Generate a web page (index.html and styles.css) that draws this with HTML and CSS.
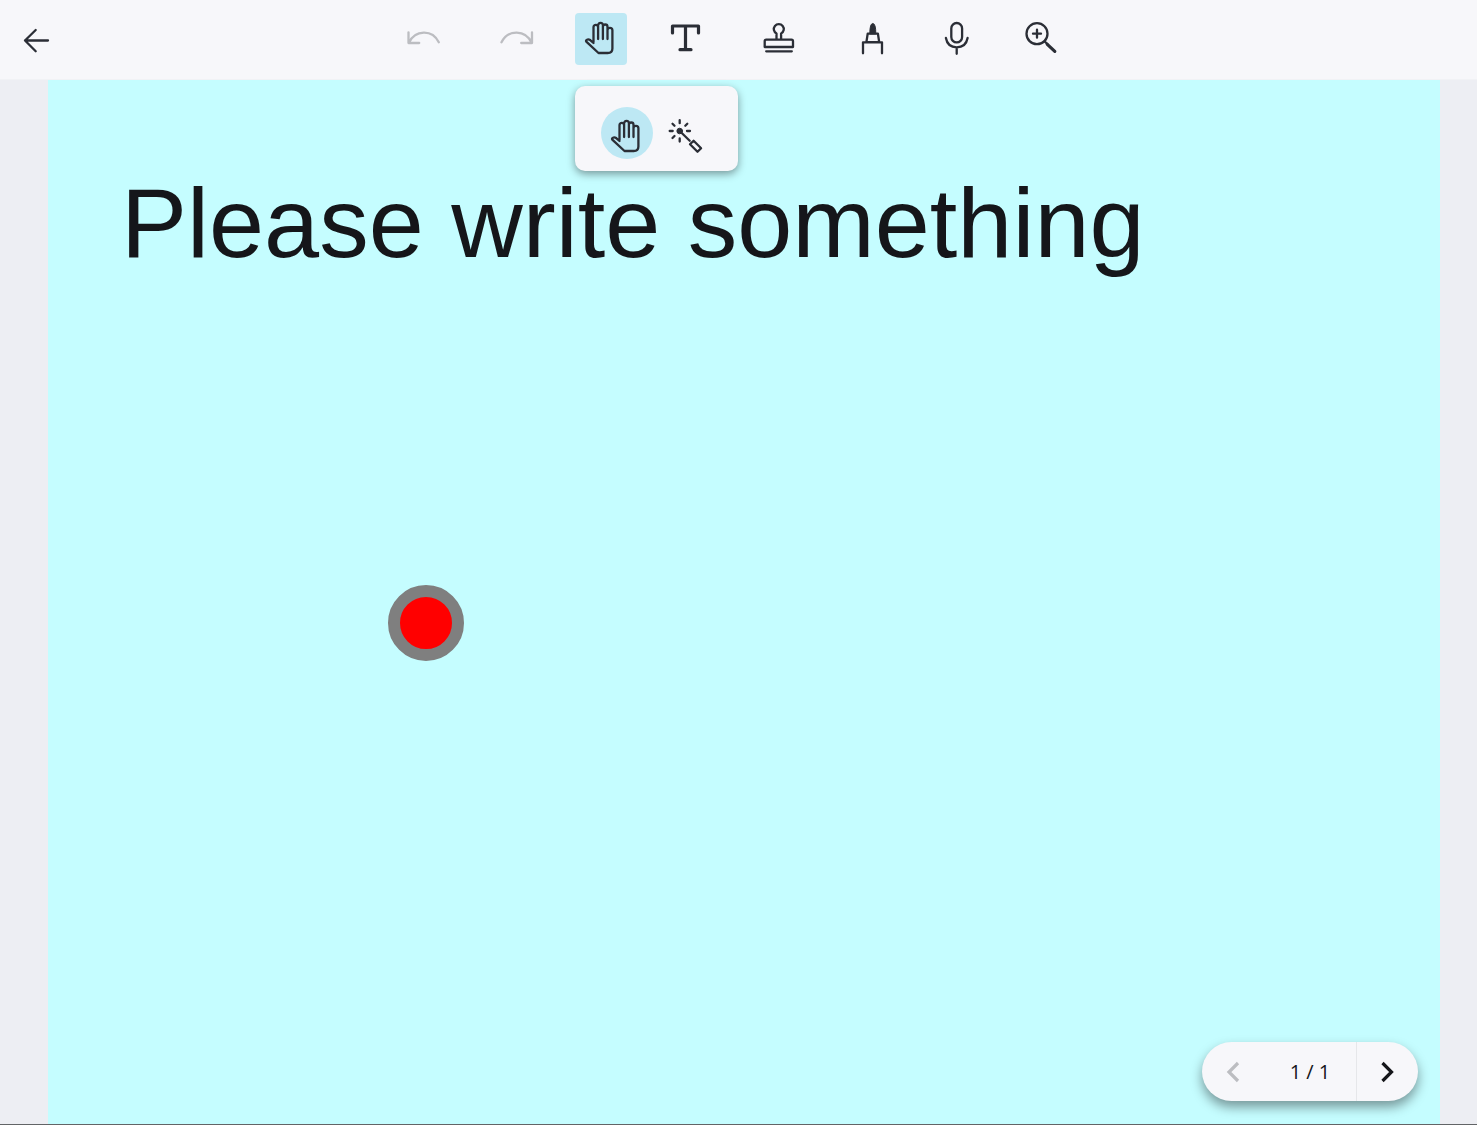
FILE: index.html
```
<!DOCTYPE html>
<html lang="en">
<head>
<meta charset="utf-8">
<meta name="viewport" content="width=device-width, initial-scale=1">
<title>Activity editor</title>
<link rel="stylesheet" href="styles.css">
</head>
<body>
<svg class="sprite" aria-hidden="true">
  <symbol id="hand" viewBox="0 0 52 52">
    <path d="M18.500 29V14.200a2.300 2.300 0 0 1 4.600 0V26M23.100 14.200v-1.900a2.400 2.400 0 0 1 4.800 0V26M27.900 13.800a2.300 2.300 0 0 1 4.600 0V26M32.500 17.300a2.400 2.400 0 0 1 4.900 0V35.500q0 4.500-4.700 4.500H23.500L11.300 28.700q-.8-1.200.6-1.900 1.500-.8 3.300.3l3.300 2.900"/>
  </symbol>
</svg>
<header class="topbar">
  <button class="tool" aria-label="Back"><svg viewBox="0 0 52 52"><path d="M38 27.500H15M25.700 17L15 27.500l10.700 10.700"/></svg></button>
  <nav class="toolbar" aria-label="Tools">
    <div class="group">
      <button class="tool" aria-label="Undo" disabled><svg viewBox="0 0 52 52"><path d="M10.500 19.300V30H21.200M11.100 29.500C17 16.500 34.500 16 40.800 29.300"/></svg></button>
    </div>
    <div class="group">
      <button class="tool" aria-label="Redo" disabled><svg viewBox="0 0 52 52"><path d="M41 19.300V30H30.200M40.500 29.500C34.500 16.500 17 16 10.500 29.300"/></svg></button>
      <div class="menu-anchor">
        <button class="tool active" aria-label="Hand" aria-expanded="true"><svg><use href="#hand"/></svg></button>
        <div class="popover">
          <button class="tool active round" aria-label="Move"><svg class="lowered"><use href="#hand"/></svg></button>
          <button class="tool" aria-label="Laser pointer"><svg viewBox="0 0 52 52"><circle class="solid" cx="20.700" cy="24" r="2.800"/><path d="M20.700 24l10 9.800M20.700 13.200v3M20.700 31.500v3M10.700 24h3M28 24h3M13.500 16.800l2 2M28.300 16.700l-2 2M13.500 31l2-2M31 37.300l3.600-3.600 7.500 7.500-3.600 3.600z"/></svg></button>
        </div>
      </div>
      <button class="tool" aria-label="Text"><svg viewBox="0 0 52 52"><path class="bold" d="M13.500 20V13H39.500v7M26.500 13V36.500M21 36.700H32"/></svg></button>
    </div>
    <div class="group">
      <button class="tool" aria-label="Stamp"><svg viewBox="0 0 52 52"><path d="M24.500 26.500V20.500a5 5 0 1 1 4.600 0V26.500M14.200 26.700H39.500q1.500 0 1.500 1.500V34H12.700V28.200q0-1.500 1.500-1.500z"/><path d="M14.200 38.300H39.800"/></svg></button>
    </div>
    <div class="group">
      <button class="tool" aria-label="Marker"><svg viewBox="0 0 52 52"><path class="solid" d="M24.800 20.500Q24.800 10.500 27.800 10.500T30.800 20.500z"/><path d="M22.700 20.700h10.200l1.300 8.500H21.400zM18 40.300V29.300H37v11"/></svg></button>
      <button class="tool" aria-label="Record audio"><svg viewBox="0 0 52 52"><rect x="22.300" y="10" width="10.800" height="19.400" rx="5.400"/><path d="M16.900 25C18 31 22 34.300 27.700 34.300S37.500 31 38.600 25M27.700 34.300v6.500"/></svg></button>
      <button class="tool" aria-label="Zoom in"><svg viewBox="0 0 52 52"><circle cx="24" cy="20.700" r="10.500"/><path d="M31.500 28.300l3 3M20 20.700h8M24 16.700v8"/><path class="bold" d="M34.300 31.300l7.500 7"/></svg></button>
    </div>
  </nav>
</header>
<main class="workspace">
  <section class="canvas">
    <h1 class="prompt">Please write something</h1>
    <div class="marker"></div>
    <div class="pager">
      <button class="page-button" aria-label="Previous page" disabled><svg viewBox="0 0 24 24"><path class="bold" d="M17 3L8 12l9 9"/></svg></button>
      <span class="page-count">1 / 1</span>
      <button class="page-button next" aria-label="Next page"><svg viewBox="0 0 24 24"><path class="bold" d="M6.500 3l9 9-9 9"/></svg></button>
    </div>
  </section>
</main>
</body>
</html>
```
FILE: styles.css
```
* { box-sizing: border-box; }

body {
  margin: 0;
  min-height: 100vh;
  display: flex;
  flex-direction: column;
  background: #edeef3;
  color: #15161a;
  font-family: "Open Sans", "Noto Sans", sans-serif;
}

.sprite { position: absolute; width: 0; height: 0; }

.topbar {
  display: flex;
  height: 80px;
  padding: 13px 76px 0 10px;
  background: #f7f7fa;
  border-bottom: 1px solid #f1f2f5;
}

.toolbar {
  flex: 1;
  display: flex;
  justify-content: center;
  gap: 41px;
}

.group { display: flex; gap: 32px; }

button {
  border: 0;
  padding: 0;
  background: none;
  color: #2b2e36;
}
button:disabled { color: #bcbdc1; }

svg {
  display: block;
  fill: none;
  stroke: currentColor;
  stroke-width: 2.3;
  stroke-linecap: round;
  stroke-linejoin: round;
}
.bold { stroke-width: 3.2; }
.solid { fill: currentColor; stroke-width: 1; }

.tool { width: 52px; height: 52px; border-radius: 4px; }
.tool svg { width: 52px; height: 52px; }
.tool.active { background: #bde8f4; }
.tool.round { border-radius: 50%; }
.tool .lowered { padding-top: 4px; height: 56px; }

.menu-anchor { position: relative; }

.popover {
  position: absolute;
  z-index: 1;
  top: 73px;
  left: 0;
  display: flex;
  gap: 6px;
  padding: 21px 27px 12px 26px;
  border-radius: 10px;
  background: #f7f7fa;
  box-shadow: 0 3px 8px rgba(0, 0, 0, 0.4);
}

.workspace {
  flex: 1;
  display: flex;
  padding: 0 37px 0 48px;
  border-bottom: 1px solid #626466;
}

.canvas {
  position: relative;
  flex: 1;
  padding: 84px 73px;
  background: #c5fdff;
}

.prompt {
  margin: 0;
  font: 400 99px/118px "Liberation Sans", Arial, sans-serif;
}

.marker {
  position: absolute;
  top: 505px;
  left: 340px;
  width: 76px;
  height: 76px;
  border: 12px solid #7f7f7f;
  border-radius: 50%;
  background: #f00;
}

.pager {
  position: absolute;
  right: 22px;
  bottom: 23px;
  display: flex;
  align-items: stretch;
  width: 216px;
  height: 59px;
  border-radius: 30px;
  background: #f7f7fa;
  box-shadow: 0 6px 12px rgba(0, 0, 0, 0.4);
}

.page-button {
  display: flex;
  align-items: center;
  justify-content: center;
  width: 62px;
}
.page-button svg {
  width: 24px;
  height: 24px;
  stroke-linecap: butt;
  stroke-linejoin: miter;
}
.next { border-left: 1px solid #e6e7ea; color: #15161a; }

.page-count {
  flex: 1;
  font-size: 20px;
  line-height: 59px;
  text-align: center;
}
```
